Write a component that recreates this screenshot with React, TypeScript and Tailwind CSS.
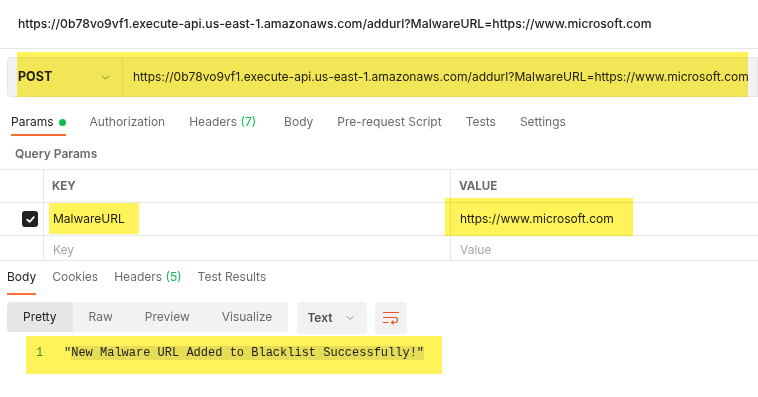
import React from "react";
import { ChevronDown } from "lucide-react";

const URL = "https://0b78vo9vf1.execute-api.us-east-1.amazonaws.com/addurl?MalwareURL=https://www.microsoft.com";

function WrapIcon() {
  return (
    <svg width="18" height="16" viewBox="0 0 18 16" fill="none" stroke="#e8541e" strokeWidth="1.2" strokeLinecap="round" strokeLinejoin="round">
      <path d="M1.5 2.5 H16.5" />
      <path d="M1.5 7.5 H13 a2.5 2.5 0 0 1 0 5 H9.5" />
      <path d="M11.2 10.8 L9.5 12.5 L11.2 14.2" />
      <path d="M1.5 12.5 H6" />
    </svg>
  );
}

export default function App() {
  const tabs = ["Authorization", "Headers", "Body", "Pre-request Script", "Tests", "Settings"];
  return (
    <div className="w-[758px] h-[397px] bg-white overflow-hidden text-[#212121]" style={{ fontFamily: "Inter, 'Noto Sans', sans-serif" }}>
      {/* Title */}
      <div className="h-[49px] border-b border-[#e6e6e6] flex items-center pl-[18px] text-[12.2px] font-medium whitespace-nowrap">
        {URL}
      </div>

      {/* Request bar */}
      <div className="pt-[8px]">
        <div className="relative">
          <div className="ml-[7px] h-[40px] flex border border-[#e6e6e6] rounded-l-[4px] bg-[#f2f2f2]">
            <div className="w-[115px] shrink-0 border-r border-[#e0e0e0] flex items-center justify-between pl-[10px] pr-[10px]">
              <span className="text-[12.5px] font-bold">POST</span>
              <ChevronDown size={13} strokeWidth={1.5} className="text-[#6b6b6b]" />
            </div>
            <div className="flex items-center pl-[10px] text-[12.05px] whitespace-nowrap overflow-hidden">{URL}</div>
          </div>
          <div className="absolute left-[17px] top-[-5px] w-[731px] h-[45px] bg-[#fff35a] mix-blend-multiply" />
        </div>
      </div>

      {/* Tabs */}
      <div className="mt-[7px] flex pl-[11px] text-[12px] text-[#6b6b6b]">
        <div className="h-[32px] pt-[9px] border-b-2 border-[#ff6c37] text-[#212121] flex items-start">
          <span className="leading-[18px]">Params</span>
          <span className="ml-[5px] mt-[6px] w-[7px] h-[7px] rounded-full bg-[#0cbb52]" />
        </div>
        {tabs.map((t) => (
          <div key={t} className={`h-[32px] pt-[9px] leading-[18px] ${t === "Body" ? "ml-[28px]" : "ml-[24px]"}`}>
            {t === "Headers" ? (
              <span>
                Headers <span className="text-[#0cbb52]">(7)</span>
              </span>
            ) : (
              t
            )}
          </div>
        ))}
      </div>

      {/* Query Params */}
      <div className="h-[33px] pl-[15px] pt-[10px] text-[12px] font-semibold text-[#6b6b6b] leading-[16px]">Query Params</div>

      {/* Table */}
      <div className="border-t border-[#e6e6e6] text-[12px]">
        <div className="flex h-[33px] border-b border-[#e6e6e6]">
          <div className="w-[44px] border-r border-[#e6e6e6]" />
          <div className="w-[407px] border-r border-[#e6e6e6] flex items-center pl-[8px] pt-[2px] text-[11.5px] font-bold text-[#6b6b6b]">KEY</div>
          <div className="flex-1 flex items-center pl-[8px] pt-[2px] text-[11.5px] font-bold text-[#6b6b6b]">VALUE</div>
        </div>
        <div className="flex h-[33px] border-b border-[#e6e6e6]">
          <div className="w-[44px] border-r border-[#e6e6e6] flex items-center pl-[22px]">
            <div className="w-[16px] h-[16px] rounded-[3px] bg-[#212121] flex items-center justify-center">
              <svg width="11" height="11" viewBox="0 0 12 12" fill="none" stroke="white" strokeWidth="2" strokeLinecap="round" strokeLinejoin="round">
                <path d="M2.5 6.2 L5 8.6 L9.6 3.4" />
              </svg>
            </div>
          </div>
          <div className="relative w-[407px] border-r border-[#e6e6e6] flex items-center pl-[9px]">
            MalwareURL
            <div className="absolute left-[5px] top-0 w-[90px] h-[31px] bg-[#fff35a] mix-blend-multiply" />
          </div>
          <div className="relative flex-1 flex items-center pl-[9px]">
            https://www.microsoft.com
            <div className="absolute left-[-6px] top-[-5px] w-[188px] h-[38px] bg-[#fff35a] mix-blend-multiply" />
          </div>
        </div>
        <div className="flex h-[25px] border-b border-[#e6e6e6] text-[#a6a6a6]">
          <div className="w-[44px] border-r border-[#e6e6e6]" />
          <div className="w-[407px] border-r border-[#e6e6e6] pl-[9px] pt-[5px] leading-[18px]">Key</div>
          <div className="flex-1 pl-[9px] pt-[5px] leading-[18px]">Value</div>
        </div>
      </div>

      {/* Response tabs */}
      <div className="flex pl-[7px] gap-[16px] text-[12px] text-[#6b6b6b]">
        <div className="h-[34px] pt-[7px] leading-[18px] border-b-2 border-[#ff6c37] text-[#212121]">Body</div>
        <div className="h-[34px] pt-[7px] leading-[18px]">Cookies</div>
        <div className="h-[34px] pt-[7px] leading-[18px]">
          Headers <span className="text-[#0cbb52]">(5)</span>
        </div>
        <div className="h-[34px] pt-[7px] leading-[18px]">Test Results</div>
      </div>

      {/* Toolbar */}
      <div className="mt-[7px] flex items-start pl-[7px] text-[12px]">
        <div className="h-[30px] flex rounded-[4px] bg-[#f2f2f2] overflow-hidden text-[#6b6b6b]">
          <div className="px-[16px] flex items-center bg-[#e6e6e6] text-[#212121]">Pretty</div>
          <div className="px-[16px] flex items-center">Raw</div>
          <div className="px-[16px] flex items-center">Preview</div>
          <div className="px-[16px] flex items-center">Visualize</div>
        </div>
        <div className="ml-[9px] w-[70px] h-[32px] rounded-[4px] bg-[#f2f2f2] flex items-center justify-between pl-[10px] pr-[11px] text-[#505050] font-semibold text-[12px]">
          <span>Text</span>
          <ChevronDown size={12} strokeWidth={1.5} className="text-[#6b6b6b]" />
        </div>
        <div className="ml-[8px] w-[32px] h-[32px] rounded-[4px] bg-[#f2f2f2] flex items-center justify-center">
          <WrapIcon />
        </div>
      </div>

      {/* Code */}
      <div className="mt-[2px] ml-[26px] w-[416px] h-[38px] bg-[#fff35a] pt-[8px] pl-[10px] flex text-[12px] leading-[18px] whitespace-pre" style={{ fontFamily: "'Liberation Mono', monospace" }}>
        <span className="text-[#4f8a2a] w-[28px]">1</span>
        <span>
          "<span className="bg-[#e6dc55]">New Malware URL Added to Blacklist Successfully!"</span>
        </span>
      </div>
    </div>
  );
}
